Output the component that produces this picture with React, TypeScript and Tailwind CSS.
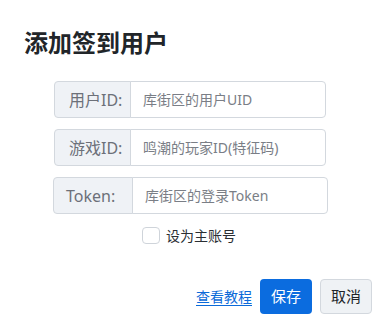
const rows = [
  { label: "用户ID:", placeholder: "库街区的用户UID", labelW: "w-[77px] pl-[14px]", ml: "ml-[54px]" },
  { label: "游戏ID:", placeholder: "鸣潮的玩家ID(特征码)", labelW: "w-[77px] pl-[14px]", ml: "ml-[54px]" },
  { label: "Token:", placeholder: "库街区的登录Token", labelW: "w-[80px] pl-[12px]", ml: "ml-[53px]" },
]

const App = () => {
  return (
    <div className="w-[382px] h-[325px] bg-white overflow-hidden font-['Noto_Sans','Noto_Sans_CJK_SC',sans-serif]">
      <h2 className="pl-[24px] pt-[27px] text-[24px] leading-[32px] font-bold text-[#212529]">
        添加签到用户
      </h2>

      <div className="mt-[22px] flex flex-col gap-[11px]">
        {rows.map((row, index) => (
          <div key={index} className={`flex h-[37px] ${row.ml}`}>
            <span
              className={`${row.labelW} flex items-center shrink-0 rounded-l-[4px] border border-[#d3d8de] bg-[#eff2f6] text-[16px] text-[#6c7079]`}
            >
              {row.label}
            </span>
            <input
              className="w-[196px] -ml-px rounded-r-[4px] border border-[#d3d8de] bg-white px-[12px] text-[14px] text-[#212529] outline-none placeholder:text-[#7a7e86]"
              placeholder={row.placeholder}
            />
          </div>
        ))}
      </div>

      <label className="mt-[12px] ml-[142px] flex items-center gap-[6px] h-[19px]">
        <span className="w-[18px] h-[17px] rounded-[4px] border border-[#cfd4da] bg-white" />
        <span className="text-[14px] text-[#2a2e33]">设为主账号</span>
      </label>

      <div className="mt-[34px] flex items-center justify-end gap-[8px] pr-[10px]">
        <a href="#" className="text-[14px] text-[#0b6ad9] underline underline-offset-[3px]">
          查看教程
        </a>
        <button className="h-[35px] w-[52px] rounded-[4px] bg-[#0b6cdf] text-[15px] text-white">
          保存
        </button>
        <button className="h-[35px] w-[52px] rounded-[4px] border border-[#d3d8de] bg-[#eff2f5] text-[15px] text-[#212529]">
          取消
        </button>
      </div>
    </div>
  )
}

export default App
